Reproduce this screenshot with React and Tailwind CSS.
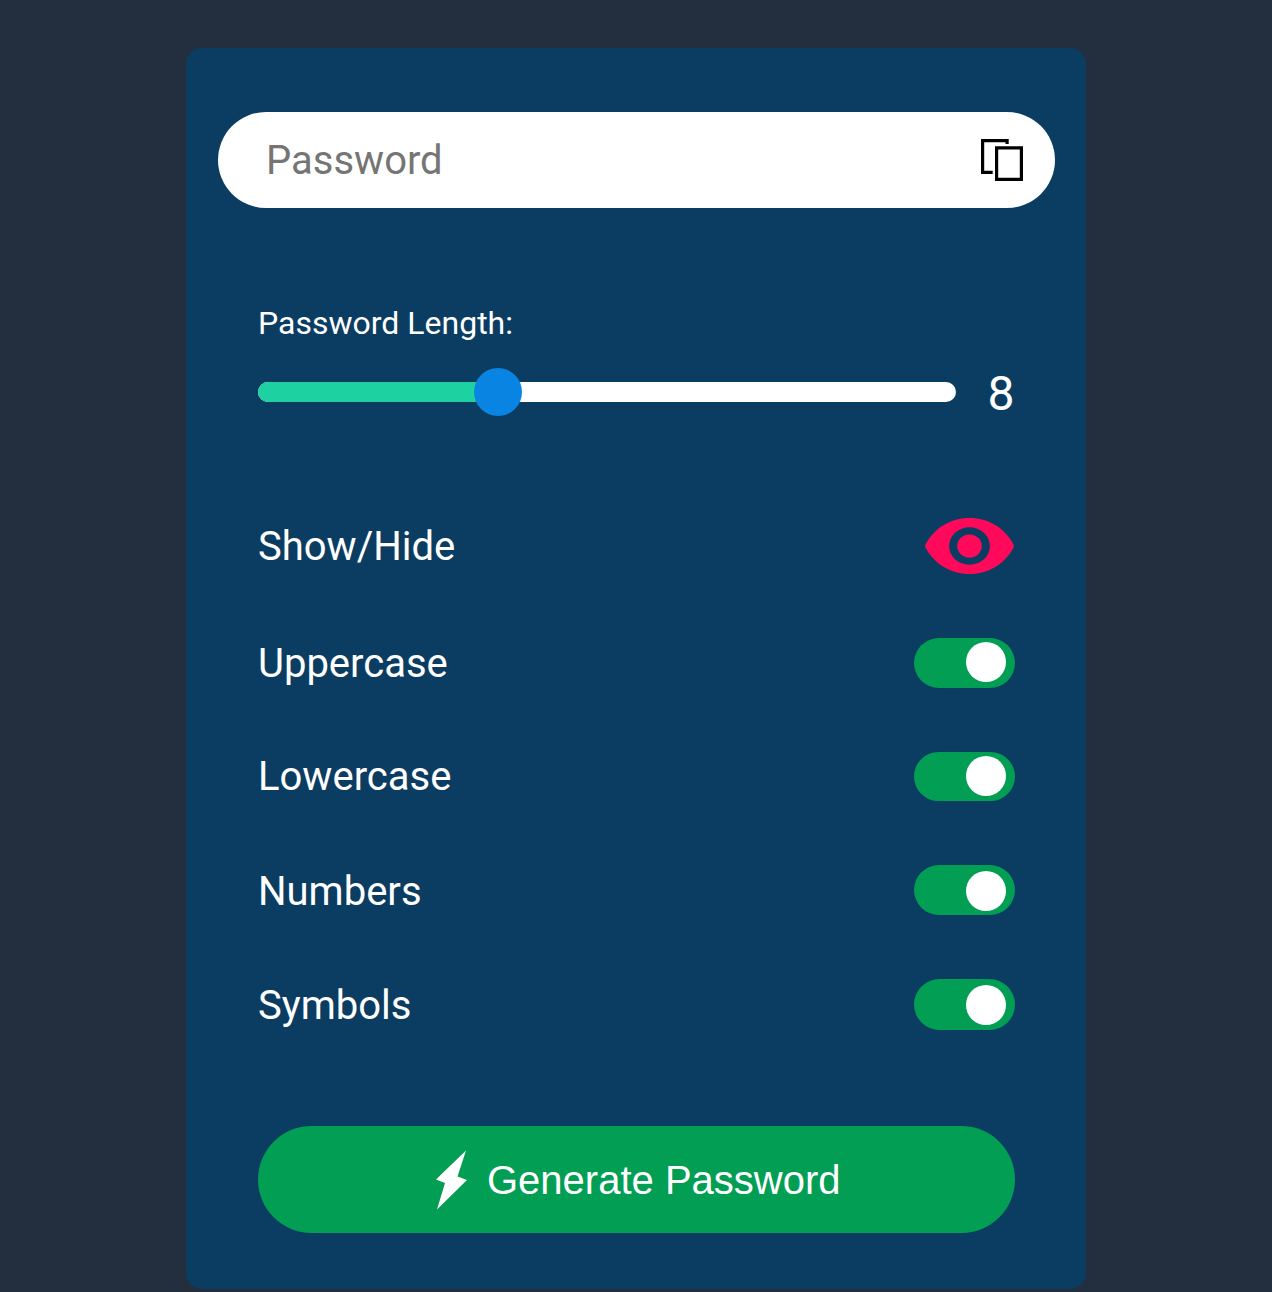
const options = [
  { label: "Uppercase", row: "h-[49.5px] mt-[64px]", text: "top-[0.75px]", knob: "mt-[4px]" },
  { label: "Lowercase", row: "h-[49.5px] mt-[64px]", text: "top-[0.25px]", knob: "mt-[4px]" },
  { label: "Numbers", row: "h-[49.5px] mt-[64px]", text: "top-[2.5px]", knob: "mt-[6px]" },
  { label: "Symbols", row: "h-[51px] mt-[64px]", text: "top-[2px]", knob: "mt-[6px]" },
];

export default function App() {
  return (
    <main className="flex h-[1292px] w-full justify-center overflow-hidden bg-[#232f3f] pt-12 font-['Roboto',sans-serif] text-white">
      <section className="h-[1241px] w-[900px] rounded-2xl bg-[#0b3d62] px-[31.5px] pt-16">
        <div className="flex h-24 w-[837px] items-center justify-between rounded-full bg-white pl-[48.5px] pr-[31.5px]">
          <span className="mt-[2px] text-[40px] leading-none tracking-normal text-[#757575]">Password</span>
          <svg width="42" height="42" viewBox="0 0 42 42" fill="none" stroke="#000" strokeWidth="3.2">
            <path d="M11.7 33.3H1.6V1.6H26.1V5" />
            <path d="M15.6 8.9H40.4V40.3H15.6Z" />
          </svg>
        </div>
        <div className="ml-10 w-[757px]">
          <div className="mt-[96px] h-[38px] pl-[0.5px] text-[32px] leading-[38px]">Password Length:</div>
          <div className="mt-[26px] flex h-12 items-center justify-between">
            <div className="relative flex h-[19.5px] w-[698px] items-center rounded-full bg-white">
              <div className="h-full w-[240px] rounded-l-full bg-[#1dd1a1]" />
              <div className="absolute left-[216px] h-12 w-12 rounded-full bg-[#0984e3]" />
            </div>
            <span className="mt-1 text-[48px] leading-none">8</span>
          </div>
          <div className="mt-[102px] flex h-14 items-center justify-between">
            <span className="ml-[0.5px] mt-[2px] text-[40px] leading-none">Show/Hide</span>
            <svg className="mr-[0.5px]" width="89" height="56" viewBox="0 0 89 56">
              <path fill="#ff0a5b" d="M0.5 29.5Q-0.2 28 0.5 26.5C9 10 26 0 44.5 0S80 10 88.5 26.5Q89.2 28 88.5 29.5C80 46 63 56 44.5 56S9 46 0.5 29.5Z" />
              <ellipse cx="44.5" cy="28" rx="20.4" ry="18.8" fill="#0b3d62" />
              <ellipse cx="44.5" cy="28" rx="12.3" ry="11.5" fill="#ff0a5b" />
            </svg>
          </div>
          {options.map((o) => (
            <div key={o.label} className={`flex items-center justify-between ${o.row}`}>
              <span className={`relative ml-[0.5px] text-[40px] leading-none ${o.text}`}>{o.label}</span>
              <div className="flex h-full w-[101px] items-start justify-end rounded-full bg-[#029e54] pr-[8.5px]">
                <div className={`h-10 w-10 rounded-full bg-white ${o.knob}`} />
              </div>
            </div>
          ))}
          <button className="mt-[96.5px] flex h-[107px] w-full items-center rounded-full bg-[#029e54] pl-[178.5px] font-['Liberation_Sans',sans-serif] text-[40px]">
            <svg width="31" height="60" viewBox="0 0 31 60" fill="white">
              <path d="M30 0.5L0 29.5L9 33L1 59.5L31 30L21.5 26.5Z" />
            </svg>
            <span className="ml-5">Generate Password</span>
          </button>
        </div>
      </section>
    </main>
  );
}
